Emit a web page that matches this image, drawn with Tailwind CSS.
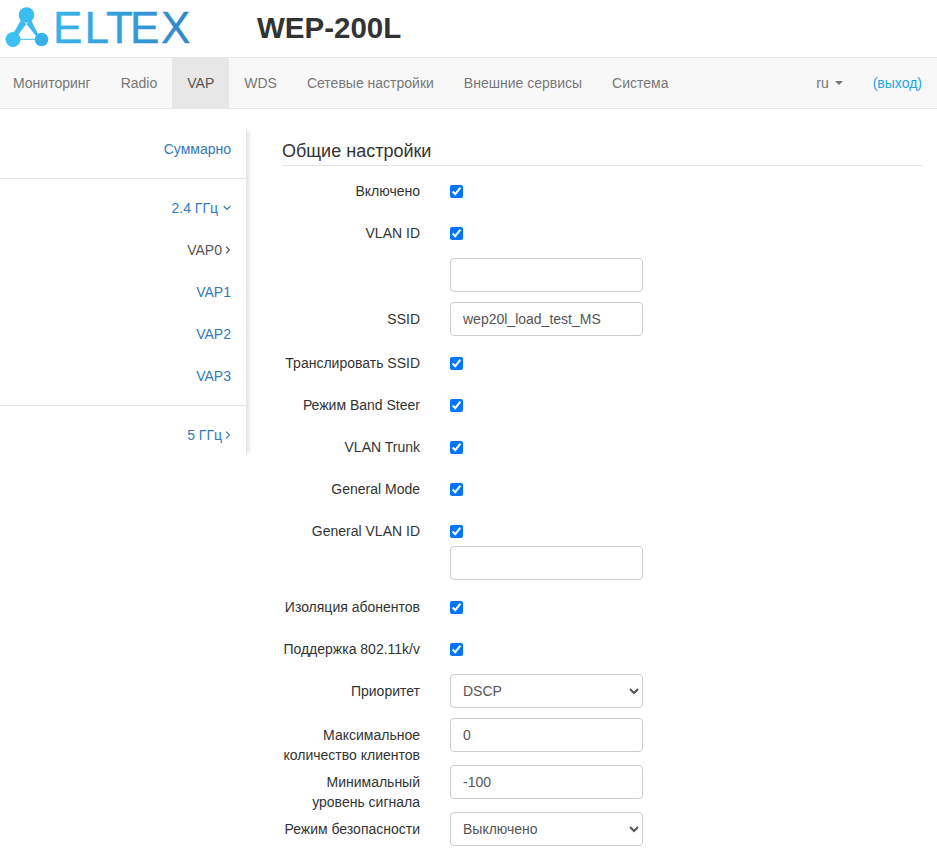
<!DOCTYPE html>
<html lang="ru">
<head>
   <meta charset="UTF-8">
   <title>WEP-200L</title>
   <script src="https://cdn.jsdelivr.net/npm/@tailwindcss/browser@4"></script>
</head>
<body class="bg-white text-[#333] text-[14px] leading-5 font-['Liberation_Sans',Arial,sans-serif] overflow-hidden">

<!-- Header -->
<header class="h-[57px] flex items-center">
   <svg class="shrink-0" width="257" height="57" viewBox="0 0 257 57">
      <defs>
         <linearGradient id="brand" gradientUnits="userSpaceOnUse" x1="5" y1="0" x2="195" y2="0">
            <stop offset="0" stop-color="#3cc4f6"/>
            <stop offset="1" stop-color="#3185c9"/>
         </linearGradient>
      </defs>
      <path d="M21 20L13 34L17 36L26.5 24Z" fill="#3bbdf2"/>
      <path d="M31 20L38 34L36 36L26.5 24Z" fill="#3bb8ef"/>
      <path d="M12 38.8H42V39.8H12Z" fill="#3bbdf2"/>
      <circle cx="26.5" cy="15" r="7.8" fill="#3bbdf2"/>
      <circle cx="13" cy="39.5" r="7.5" fill="#3cc0f4"/>
      <circle cx="41.5" cy="39.5" r="6.8" fill="#38b2ea"/>
      <text x="53 84.5 106 130 161" y="42.5" font-family="Liberation Sans, Arial, sans-serif" font-size="44" fill="url(#brand)" stroke="url(#brand)" stroke-width="0.4" stroke-linejoin="round">ELTEX</text>
   </svg>
   <h1 class="text-[29.5px] leading-[33px] pb-[2px] font-bold text-[#333]">WEP-200L</h1>
</header>

<!-- Navbar -->
<nav class="h-[52px] flex items-stretch justify-between bg-[#f8f8f8] border-y border-[#e7e7e7] text-[#777]">
   <ul class="flex items-stretch ml-[-2px]">
      <li class="px-[15px] flex items-center">Мониторинг</li>
      <li class="px-[15px] flex items-center">Radio</li>
      <li class="px-[15px] flex items-center bg-[#e7e7e7] text-[#555]">VAP</li>
      <li class="px-[15px] flex items-center">WDS</li>
      <li class="px-[15px] flex items-center">Сетевые настройки</li>
      <li class="px-[15px] flex items-center">Внешние сервисы</li>
      <li class="px-[15px] flex items-center">Система</li>
   </ul>
   <div class="flex items-center pr-[15px]">
      <span>ru</span>
      <span class="ml-[6px] w-0 h-0 border-x-4 border-x-transparent border-t-4 border-t-[#777]"></span>
      <a href="#" class="ml-[30px] text-[#1ca7e0]">(выход)</a>
   </div>
</nav>

<div class="flex items-start">

   <!-- Sidebar -->
   <aside class="w-[247px] mt-[19px] shrink-0 text-right text-[#337ab7] border-r border-[#e8e8e8] shadow-[5px_0_4px_-3px_rgba(0,0,0,0.12)]">
      <a href="#" class="h-[42px] pr-[15px] flex items-center justify-end">Суммарно</a>
      <hr class="mt-2 border-[#e5e5e5]">
      <a href="#" class="h-[42px] mt-2 pr-[15px] flex items-center justify-end gap-[5px]">2.4 ГГц
         <svg width="8" height="6" viewBox="0 0 8 6"><path d="M.7 1.2L4 4.4L7.3 1.2" fill="none" stroke="currentColor" stroke-width="1.2"/></svg>
      </a>
      <a href="#" class="h-[42px] pr-[15px] flex items-center justify-end gap-[3px] text-[#555]">VAP0
         <svg width="6" height="8" viewBox="0 0 6 8"><path d="M1.2 .7L4.4 4L1.2 7.3" fill="none" stroke="currentColor" stroke-width="1.2"/></svg>
      </a>
      <a href="#" class="h-[42px] pr-[15px] flex items-center justify-end">VAP1</a>
      <a href="#" class="h-[42px] pr-[15px] flex items-center justify-end">VAP2</a>
      <a href="#" class="h-[42px] pr-[15px] flex items-center justify-end">VAP3</a>
      <hr class="mt-2 border-[#e5e5e5]">
      <a href="#" class="h-[42px] mt-2 pr-[15px] flex items-center justify-end gap-[3px]">5 ГГц
         <svg width="6" height="8" viewBox="0 0 6 8"><path d="M1.2 .7L4.4 4L1.2 7.3" fill="none" stroke="currentColor" stroke-width="1.2"/></svg>
      </a>
   </aside>

   <!-- Form -->
   <main class="ml-[35px] w-[640px]">
      <h3 class="mt-[32px] text-[18px] leading-5 pb-[4px] border-b border-[#e5e5e5]">Общие настройки</h3>
      <form class="pt-2 text-[#333]">
         <div class="flex items-start h-[34px]">
            <label class="w-[138px] pt-[7px] text-right">Включено</label>
            <input type="checkbox" checked class="ml-[30px] mt-[11px] w-[13px] h-[13px]">
         </div>
         <div class="flex items-start h-[34px] mt-2">
            <label class="w-[138px] pt-[7px] text-right">VLAN ID</label>
            <input type="checkbox" checked class="ml-[30px] mt-[11px] w-[13px] h-[13px]">
         </div>
         <div class="flex items-start mt-2">
            <div class="w-[138px]"></div>
            <input type="text" class="ml-[30px] w-[193px] h-[34px] px-3 border border-[#ccc] rounded text-[#555]">
         </div>
         <div class="flex items-start mt-[10px]">
            <label class="w-[138px] pt-[7px] text-right">SSID</label>
            <input type="text" value="wep20l_load_test_MS" class="ml-[30px] w-[193px] h-[34px] px-3 border border-[#ccc] rounded text-[#555]">
         </div>
         <div class="flex items-start h-[34px] mt-[10px]">
            <label class="w-[138px] pt-[7px] text-right">Транслировать SSID</label>
            <input type="checkbox" checked class="ml-[30px] mt-[11px] w-[13px] h-[13px]">
         </div>
         <div class="flex items-start h-[34px] mt-2">
            <label class="w-[138px] pt-[7px] text-right">Режим Band Steer</label>
            <input type="checkbox" checked class="ml-[30px] mt-[11px] w-[13px] h-[13px]">
         </div>
         <div class="flex items-start h-[34px] mt-2">
            <label class="w-[138px] pt-[7px] text-right">VLAN Trunk</label>
            <input type="checkbox" checked class="ml-[30px] mt-[11px] w-[13px] h-[13px]">
         </div>
         <div class="flex items-start h-[34px] mt-2">
            <label class="w-[138px] pt-[7px] text-right">General Mode</label>
            <input type="checkbox" checked class="ml-[30px] mt-[11px] w-[13px] h-[13px]">
         </div>
         <div class="flex items-start h-[32px] mt-2">
            <label class="w-[138px] pt-[7px] text-right">General VLAN ID</label>
            <input type="checkbox" checked class="ml-[30px] mt-[11px] w-[13px] h-[13px]">
         </div>
         <div class="flex items-start">
            <div class="w-[138px]"></div>
            <input type="text" class="ml-[30px] w-[193px] h-[34px] px-3 border border-[#ccc] rounded text-[#555]">
         </div>
         <div class="flex items-start h-[34px] mt-[10px]">
            <label class="w-[138px] pt-[7px] text-right">Изоляция абонентов</label>
            <input type="checkbox" checked class="ml-[30px] mt-[11px] w-[13px] h-[13px]">
         </div>
         <div class="flex items-start h-[34px] mt-2">
            <label class="w-[138px] pt-[7px] text-right">Поддержка 802.11k/v</label>
            <input type="checkbox" checked class="ml-[30px] mt-[11px] w-[13px] h-[13px]">
         </div>
         <div class="flex items-start mt-2">
            <label class="w-[138px] pt-[7px] text-right">Приоритет</label>
            <select class="ml-[30px] w-[193px] h-[34px] px-2 border border-[#ccc] rounded bg-white text-[#555]">
               <option>DSCP</option>
            </select>
         </div>
         <div class="flex items-start mt-[10px]">
            <label class="w-[138px] pt-[7px] text-right">Максимальное количество клиентов</label>
            <input type="text" value="0" class="ml-[30px] w-[193px] h-[34px] px-3 border border-[#ccc] rounded text-[#555]">
         </div>
         <div class="flex items-start">
            <label class="w-[138px] pt-[7px] text-right">Минимальный уровень сигнала</label>
            <input type="text" value="-100" class="ml-[30px] w-[193px] h-[34px] px-3 border border-[#ccc] rounded text-[#555]">
         </div>
         <div class="flex items-start">
            <label class="w-[138px] pt-[7px] text-right">Режим безопасности</label>
            <select class="ml-[30px] w-[193px] h-[34px] px-2 border border-[#ccc] rounded bg-white text-[#555]">
               <option>Выключено</option>
            </select>
         </div>
      </form>
   </main>
</div>

</body>
</html>
